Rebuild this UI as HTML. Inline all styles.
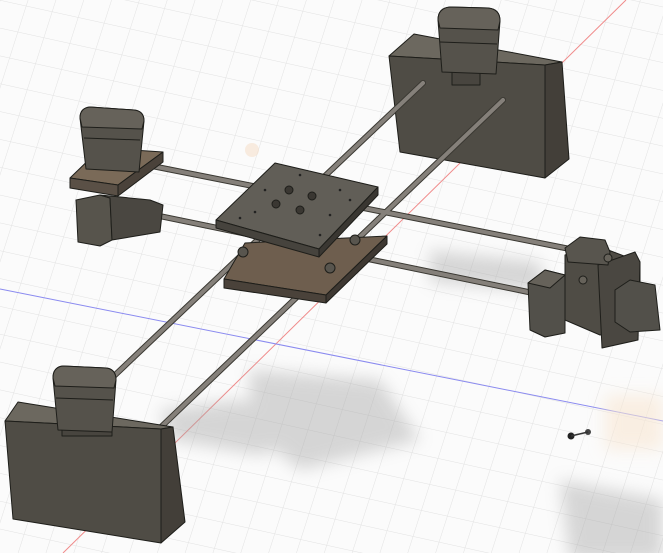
<!DOCTYPE html>
<html><head><meta charset="utf-8"><style>
html,body{margin:0;padding:0;background:#fff;}
svg{display:block}
</style></head><body>
<svg width="663" height="553" viewBox="0 0 663 553" xmlns="http://www.w3.org/2000/svg">
<defs>
<filter id="b" x="-50%" y="-50%" width="200%" height="200%"><feGaussianBlur stdDeviation="8"/></filter>
<pattern id="g" width="26" height="26" patternUnits="userSpaceOnUse" patternTransform="matrix(1,0.22,-0.32,1,0,0)">
<path d="M26 0H0V26" fill="none" stroke="#e2e2e2" stroke-width="1"/>
</pattern>
</defs>
<rect width="663" height="553" fill="#fbfbfb"/>
<rect width="663" height="553" fill="url(#g)"/>
<line x1="626" y1="0" x2="63" y2="553" stroke="#f08a8a" stroke-width="1"/>
<line x1="0" y1="289" x2="663" y2="421" stroke="#8a8af0" stroke-width="1"/>
<g filter="url(#b)" fill="#a8a8a8" opacity="0.45">
<polygon points="160,410 240,400 330,430 260,455 170,440"/>
<polygon points="250,370 380,380 420,440 300,470 250,430"/>
<polygon points="430,250 540,262 545,292 430,282"/>
<polygon points="560,480 663,500 663,560 570,560"/>
</g>
<rect x="605" y="395" width="58" height="55" fill="#f8e6d2" opacity="0.6" filter="url(#b)"/>
<circle cx="252" cy="150" r="7" fill="#f6dcc4" opacity="0.5"/>
<circle cx="571" cy="436" r="3.5" fill="#222"/><circle cx="588" cy="432" r="3" fill="#444"/>
<line x1="571" y1="436" x2="588" y2="432" stroke="#333" stroke-width="1.5"/>

<g stroke="#1e1e1a" stroke-width="1" stroke-linejoin="round">
<polygon points="389,56 414,34 562,62 545,65" fill="#6c685f"/>
<polygon points="389,56 545,65 545,178 400,152" fill="#4f4c45"/>
<polygon points="545,65 562,62 569,159 545,178" fill="#433f39"/>
<rect x="452" y="55" width="28" height="30" fill="#48453f"/>
<path d="M438,20 Q438,8 450,7 L488,8 Q500,9 500,21 L496,74 L442,72 Z" fill="#55524b"/>
<path d="M438,20 Q438,8 450,7 L488,8 Q500,9 500,21 L498,30 L440,28 Z" fill="#66625a"/>
<line x1="440" y1="42" x2="497" y2="44"/>
</g>
<g stroke-linecap="round">
<g stroke="#3a3832" stroke-width="6">
<line x1="423" y1="83" x2="114" y2="376"/><line x1="503" y1="100" x2="161" y2="427"/>
<line x1="152" y1="166" x2="575" y2="250"/><line x1="106" y1="205" x2="533" y2="293"/>
</g>
<g stroke="#85807a" stroke-width="4">
<line x1="423" y1="83" x2="114" y2="376"/><line x1="503" y1="100" x2="161" y2="427"/>
<line x1="152" y1="166" x2="575" y2="250"/><line x1="106" y1="205" x2="533" y2="293"/>
</g>
</g>
<g stroke="#1e1e1a" stroke-width="1" stroke-linejoin="round">
<polygon points="76,200 100,195 110,198 112,240 100,246 78,242" fill="#57544c"/>
<polygon points="100,195 150,200 163,205 160,232 112,240 110,198" fill="#4a4741"/>
<polygon points="70,178 101,148 163,152 118,185" fill="#7a6a58"/>
<polygon points="70,178 118,185 118,196 70,188" fill="#5a5046"/>
<polygon points="118,185 163,152 163,162 118,196" fill="#4a423a"/>
<path d="M80,118 Q80,108 90,107 L134,110 Q144,111 144,121 L139,172 L86,169 Z" fill="#55524b"/>
<path d="M80,118 Q80,108 90,107 L134,110 Q144,111 144,121 L142,129 L82,127 Z" fill="#66625a"/>
<line x1="84" y1="138" x2="140" y2="140"/>
<polygon points="224,279 245,243 387,236 326,295" fill="#6e5e4e"/>
<polygon points="224,279 326,295 326,303 224,288" fill="#4a423a"/>
<polygon points="326,295 387,236 387,244 326,303" fill="#3e3832"/>
<g fill="#58554e"><circle cx="243" cy="252" r="5"/><circle cx="330" cy="268" r="5"/><circle cx="355" cy="240" r="5"/></g>
<polygon points="216,220 275,163 378,187 319,249" fill="#615e57"/>
<polygon points="216,220 319,249 319,257 216,228" fill="#46433d"/>
<polygon points="319,249 378,187 378,195 319,257" fill="#3a3732"/>
<g fill="#3a3732"><circle cx="289" cy="190" r="4"/><circle cx="312" cy="196" r="4"/><circle cx="300" cy="210" r="4"/><circle cx="276" cy="204" r="4"/></g>
<g fill="#222" stroke="none"><circle cx="240" cy="218" r="1.3"/><circle cx="255" cy="212" r="1.3"/><circle cx="300" cy="175" r="1.3"/><circle cx="340" cy="190" r="1.3"/><circle cx="350" cy="200" r="1.3"/><circle cx="320" cy="235" r="1.3"/><circle cx="265" cy="190" r="1.3"/><circle cx="330" cy="215" r="1.3"/></g>
<polygon points="565,255 595,245 640,262 640,330 600,335 565,320" fill="#4f4c45"/>
<polygon points="598,265 635,252 640,262 638,340 602,348" fill="#4a4741"/>
<polygon points="565,248 580,237 605,240 610,252 608,265 568,262" fill="#58554e"/>
<polygon points="528,283 545,270 565,275 565,333 545,337 530,330" fill="#52504a"/>
<polygon points="528,283 545,270 565,275 550,288" fill="#66625a"/>
<polygon points="615,290 630,280 655,285 660,330 630,332 615,322" fill="#52504a"/>
<circle cx="608" cy="258" r="4" fill="#66625a"/><circle cx="583" cy="280" r="4" fill="#66625a"/>
<polygon points="5,421 18,402 173,427 161,429" fill="#6c685f"/>
<polygon points="5,421 161,429 161,543 13,519" fill="#4f4c45"/>
<polygon points="161,429 173,427 185,522 161,543" fill="#433f39"/>
<rect x="62" y="408" width="50" height="28" fill="#48453f"/>
<path d="M53,378 Q53,367 63,366 L106,368 Q116,369 116,380 L112,432 L58,430 Z" fill="#55524b"/>
<path d="M53,378 Q53,367 63,366 L106,368 Q116,369 116,380 L114,388 L55,386 Z" fill="#66625a"/>
<line x1="56" y1="398" x2="113" y2="400"/>
</g>
</svg>
</body></html>
